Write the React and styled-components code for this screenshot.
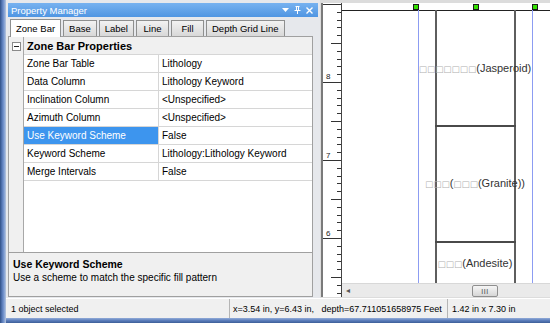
import React from 'react';
import styled, { createGlobalStyle } from 'styled-components';

const Global = createGlobalStyle`
  html, body { margin: 0; padding: 0; }
  body {
    width: 550px; height: 323px; overflow: hidden;
    font-family: "Liberation Sans", Arial, sans-serif;
    color: #000;
  }
`;

const Window = styled.div`
  width: 550px; height: 323px; display: flex; background: #5b7dbb;
`;

const LeftFrame = styled.div`
  width: 6px; flex: none;
  background: linear-gradient(to right, #2f4f85 0, #5577b5 2px, #7c9bd2 4px, #b7c6de 6px);
`;

const Body = styled.div`
  flex: 1; display: flex; flex-direction: column; min-width: 0;
`;

const Main = styled.div`
  height: 298px; display: flex; flex: none;
`;

/* ---------- Property manager ---------- */
const Dock = styled.div`
  width: 314px; flex: none; box-sizing: border-box;
  padding: 3px 0 1px 2px;
  display: flex; flex-direction: column;
  background: #e6e8ec;
`;

const TitleBar = styled.div`
  height: 14px; flex: none; display: flex; align-items: center;
  padding-left: 3px; margin-right: 2px;
  background: linear-gradient(to bottom, #77b2f0, #4f95e2);
  color: #fff; font-size: 9.5px;
`;

const TitleText = styled.span`
  flex: 1;
`;

const TitleIcons = styled.div`
  display: flex; align-items: center; gap: 5px; padding-right: 5px;
`;

const DockBody = styled.div`
  flex: 1; display: flex; flex-direction: column; margin-right: 7px;
`;

const TabStrip = styled.div`
  height: 19px; flex: none; display: flex; align-items: flex-end; gap: 1px;
  padding-left: 2px; position: relative; z-index: 1;
`;

const Tab = styled.div`
  box-sizing: border-box;
  min-width: 33px;
  height: ${p => (p.$active ? 18 : 16)}px;
  padding: 0 5px;
  display: flex; align-items: center; justify-content: center;
  border: 1px solid #8e8f8f; border-bottom: none;
  background: ${p => (p.$active ? '#fff' : 'linear-gradient(to bottom, #f2f2f2, #d8d8d8)')};
  font-size: 9.5px;
  margin-bottom: ${p => (p.$active ? -1 : 0)}px;
  margin-right: 1px;
`;

const GridBox = styled.div`
  flex: 1; display: flex; flex-direction: column;
  border: 1px solid #a0a0a0;
  background: linear-gradient(to right, #f0f0f0 14px, #a8a8a8 14px, #a8a8a8 15px, #fff 15px);
`;

const Row = styled.div`
  display: grid; grid-template-columns: 15px 135px 1fr;
  height: 18px; font-size: 10px;
`;

const Gutter = styled.div`
  background: #f0f0f0; display: flex; align-items: center; justify-content: center;
  border-right: 1px solid #a8a8a8;
`;

const HeaderCell = styled.div`
  grid-column: 2 / 4; background: #f0f0f0; font-weight: bold; font-size: 11px;
  display: flex; align-items: center; padding-left: 3px;
  border-bottom: 1px solid #d6d6d6;
`;

const NameCell = styled.div`
  display: flex; align-items: center; padding-left: 3px;
  border-bottom: 1px solid #d6d6d6; border-right: 1px solid #d6d6d6;
  background: ${p => (p.$selected ? '#3d95ee' : '#fff')};
  color: ${p => (p.$selected ? '#fff' : '#000')};
  white-space: nowrap;
`;

const ValueCell = styled.div`
  display: flex; align-items: center; padding-left: 3px;
  border-bottom: 1px solid #d6d6d6; background: #fff; white-space: nowrap;
`;

const MinusBox = styled.div`
  width: 7px; height: 7px; border: 1px solid #8a8a8a; background: #fff;
  display: flex; align-items: center; justify-content: center;
  &::after { content: ''; width: 5px; height: 1px; background: #222; }
`;

const DescBox = styled.div`
  height: 44px; flex: none; box-sizing: border-box;
  border: 1px solid #a0a0a0; border-top: none;
  background: #f0f0f0; padding: 5px 0 0 4px;
  font-size: 10px; line-height: 13px;
`;

const DescTitle = styled.div`
  font-weight: bold; font-size: 10.5px;
`;

/* ---------- Canvas ---------- */
const CanvasPane = styled.div`
  flex: 1; display: flex; box-sizing: border-box;
  padding: 3px 0 1px 1px; background: #dcdcdc; min-width: 0;
`;

const Ruler = styled.div`
  width: 18px; flex: none; background: #fff;
  border-left: 2px solid #7a7a7a; border-right: 1px solid #444;
  position: relative;
`;

const RulerLabel = styled.span`
  position: absolute; left: 3px; font-size: 8px; color: #222; line-height: 8px;
`;

const Drawing = styled.div`
  flex: 1; display: flex; flex-direction: column; min-width: 0;
`;

const Surface = styled.div`
  flex: 1; position: relative; background: #fff; overflow: hidden;
`;

const HLine = styled.div`
  position: absolute; height: ${p => p.$h || 1}px; background: ${p => p.$c};
`;

const VLine = styled.div`
  position: absolute; top: 7px; bottom: 0; width: ${p => p.$w || 1}px; background: ${p => p.$c};
`;

const Handle = styled.div`
  position: absolute; top: 1px; width: 4px; height: 4px;
  background: #33e000; border: 1px solid #1a1a1a;
`;

const ZoneLabel = styled.div`
  position: absolute; left: 133px; transform: translate(-50%, -50%);
  font-size: 11px; color: #333; white-space: nowrap;
`;

const Tofu = styled.span`
  font-family: "DejaVu Sans", sans-serif; color: #b0b0b0; font-size: 8.7px;
`;

const HScroll = styled.div`
  height: 14px; flex: none; background: #eaeaea; border-top: 1px solid #d8d8d8;
  display: flex; align-items: center; position: relative; box-sizing: border-box;
`;

const ScrollArrow = styled.span`
  font-size: 8px; color: #555; margin-left: 4px;
`;

const Thumb = styled.div`
  position: absolute; left: 130px; top: 1px; width: 24px; height: 10px;
  border: 1px solid #8f8f8f; border-radius: 2px;
  background: linear-gradient(to bottom, #f6f6f6, #d6d6d6);
  display: flex; align-items: center; justify-content: center;
  font-size: 7px; color: #444; letter-spacing: 0.5px;
`;

/* ---------- Status bar ---------- */
const StatusBar = styled.div`
  height: 20px; flex: none; display: flex; align-items: center;
  background: #f0f0f0; border-top: 1px solid #fff; box-sizing: border-box;
  font-size: 9px;
`;

const StatusSeg = styled.div`
  width: ${p => p.$w}px; flex: none; padding-left: ${p => p.$pl || 3}px; box-sizing: border-box;
  white-space: pre; height: 100%; display: flex; align-items: center;
  border-right: ${p => (p.$last ? 'none' : '1px solid #b5b5b5')};
`;

const BottomFrame = styled.div`
  height: 5px; flex: none;
  background: linear-gradient(to bottom, #93acd9, #5b7dbb 50%, #3c5e98);
`;

const rows = [
  ['Zone Bar Table', 'Lithology'],
  ['Data Column', 'Lithology Keyword'],
  ['Inclination Column', '<Unspecified>'],
  ['Azimuth Column', '<Unspecified>'],
  ['Use Keyword Scheme', 'False', true],
  ['Keyword Scheme', 'Lithology:Lithology Keyword'],
  ['Merge Intervals', 'False'],
];

const tabs = ['Zone Bar', 'Base', 'Label', 'Line', 'Fill', 'Depth Grid Line'];

function RulerTicks() {
  const ticks = [];
  const inch = 78;
  const base = 1;
  for (let i = 0; i <= 40; i++) {
    const y = base + i * inch / 10;
    if (y > 294) break;
    const m = i % 10;
    let len = 4;
    if (m === 0) len = 18;
    else if (m === 5) len = 10;
    ticks.push(<line key={i} x1={18 - len} x2={18} y1={Math.round(y) + 0.5} y2={Math.round(y) + 0.5} stroke="#333" strokeWidth="1" />);
  }
  return (
    <svg width="18" height="294" style={{ position: 'absolute', left: 0, top: 0 }}>
      {ticks}
    </svg>
  );
}

function Squares({ n }) {
  return <Tofu>{'□'.repeat(n)}</Tofu>;
}

export default function App() {
  return (
    <>
      <Global />
      <Window>
        <LeftFrame />
        <Body>
          <Main>
            <Dock>
              <TitleBar>
                <TitleText>Property Manager</TitleText>
                <TitleIcons>
                  <svg width="7" height="4" viewBox="0 0 7 4"><path d="M0 0h7L3.5 4z" fill="#fff" /></svg>
                  <svg width="7" height="8" viewBox="0 0 7 8"><path d="M1.5 0.5h4M2.5 0.5v4M4.5 0.5v4M0.5 4.5h6M3.5 4.5v3.5" stroke="#fff" strokeWidth="1" fill="none" /></svg>
                  <svg width="7" height="7" viewBox="0 0 7 7"><path d="M0.5 0.5l6 6M6.5 0.5l-6 6" stroke="#fff" strokeWidth="1.4" /></svg>
                </TitleIcons>
              </TitleBar>
              <DockBody>
                <TabStrip>
                  {tabs.map((t, i) => (
                    <Tab key={t} $active={i === 0}>{t}</Tab>
                  ))}
                </TabStrip>
                <GridBox>
                  <Row>
                    <Gutter><MinusBox /></Gutter>
                    <HeaderCell>Zone Bar Properties</HeaderCell>
                  </Row>
                  {rows.map(([n, v, sel]) => (
                    <Row key={n}>
                      <Gutter />
                      <NameCell $selected={sel}>{n}</NameCell>
                      <ValueCell>{v}</ValueCell>
                    </Row>
                  ))}
                </GridBox>
                <DescBox>
                  <DescTitle>Use Keyword Scheme</DescTitle>
                  <div>Use a scheme to match the specific fill pattern</div>
                </DescBox>
              </DockBody>
            </Dock>
            <CanvasPane>
              <Ruler>
                <RulerTicks />
                <RulerLabel style={{ top: 70 }}>8</RulerLabel>
                <RulerLabel style={{ top: 149 }}>7</RulerLabel>
                <RulerLabel style={{ top: 227 }}>6</RulerLabel>
              </Ruler>
              <Drawing>
                <Surface>
                  <HLine $c="#222" style={{ left: 0, right: 0, top: 7 }} />
                  <VLine $c="#8c9cf2" style={{ left: 76 }} />
                  <VLine $c="#8c9cf2" style={{ left: 190 }} />
                  <VLine $c="#5e5e5e" $w={2} style={{ left: 93 }} />
                  <VLine $c="#5e5e5e" $w={2} style={{ left: 172 }} />
                  <HLine $c="#4a4a4a" $h={2} style={{ left: 93, width: 81, top: 122 }} />
                  <HLine $c="#4a4a4a" $h={2} style={{ left: 93, width: 81, top: 238 }} />
                  <Handle style={{ left: 71 }} />
                  <Handle style={{ left: 131 }} />
                  <Handle style={{ left: 190 }} />
                  <ZoneLabel style={{ top: 65 }}><Squares n={7} />(Jasperoid)</ZoneLabel>
                  <ZoneLabel style={{ top: 180 }}><Squares n={3} />(<Squares n={3} />(Granite))</ZoneLabel>
                  <ZoneLabel style={{ top: 260 }}><Squares n={3} />(Andesite)</ZoneLabel>
                </Surface>
                <HScroll>
                  <ScrollArrow>◂</ScrollArrow>
                  <Thumb>III</Thumb>
                </HScroll>
              </Drawing>
            </CanvasPane>
          </Main>
          <StatusBar>
            <StatusSeg $w={224} $pl={5}>1 object selected</StatusSeg>
            <StatusSeg $w={218}>{'x=3.54 in, y=6.43 in,   depth=67.711051658975 Feet'}</StatusSeg>
            <StatusSeg $last $pl={4}>1.42 in x 7.30 in</StatusSeg>
          </StatusBar>
          <BottomFrame />
        </Body>
      </Window>
    </>
  );
}
